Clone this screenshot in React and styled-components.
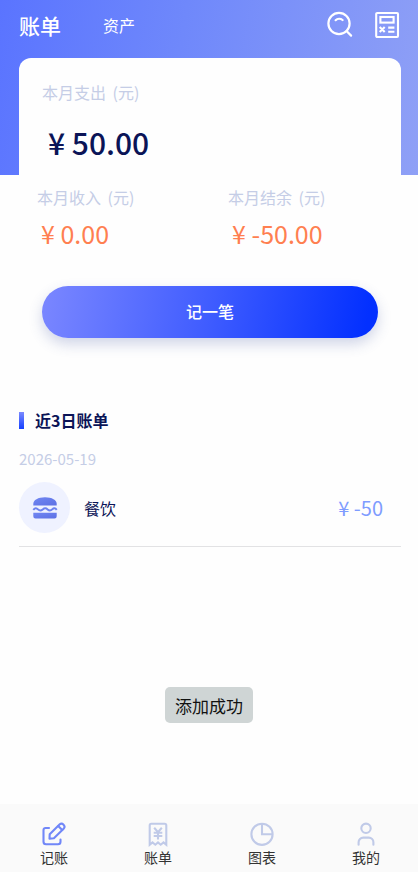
import React from "react";
import styled, { createGlobalStyle } from "styled-components";

const GlobalStyle = createGlobalStyle`
  * { box-sizing: border-box; }
  body {
    margin: 0;
    background: #fefefe;
    font-family: "Noto Sans CJK SC", sans-serif;
    color: #0b1457;
  }
  button { font-family: inherit; border: 0; padding: 0; background: none; cursor: pointer; }
  a { text-decoration: none; color: inherit; }
  h1, h2, p, ul { margin: 0; padding: 0; }
`;

const Page = styled.div`
  min-height: 100vh;
  display: flex;
  flex-direction: column;
  background: linear-gradient(100deg, #5a74ff 0%, #6f88fb 42%, #8fa0f6 100%) top / 100% 175px no-repeat;
`;

const TopBar = styled.header`
  display: flex;
  align-items: center;
  height: 58px;
  padding: 0 18px 8px 19px;
`;

const Tabs = styled.nav`
  display: flex;
  align-items: center;
  gap: 42px;
  flex: 1;
`;

const Tab = styled.a`
  color: #fff;
  font-size: ${(p) => (p.$active ? 21 : 16)}px;
  font-weight: ${(p) => (p.$active ? 500 : 400)};
  line-height: 32px;
`;

const Tools = styled.div`
  display: flex;
  gap: 21px;
`;

const IconButton = styled.button`
  display: flex;
  color: #fff;
`;

const Main = styled.main`
  flex: 1;
  padding: 0 17px 0 19px;
`;

const Summary = styled.section`
  background: #fefefe;
  border-radius: 12px 12px 0 0;
  padding: 22px 23px 0;
`;

const Label = styled.p`
  font-size: 16px;
  line-height: 24px;
  color: #c5cde6;
`;

const Unit = styled.span`
  margin-left: 3px;
`;

const Total = styled.p`
  padding-left: 6px;
  margin-top: 16px;
  font-size: 30px;
  font-weight: 500;
  line-height: 44px;
`;

const Figures = styled.div`
  display: grid;
  grid-template-columns: 1fr 1fr;
  margin: 21px -23px 0;
`;

const Figure = styled.div`
  padding-left: 18px;
`;

const Amount = styled.p`
  padding-left: 4px;
  margin-top: 6px;
  font-size: 25px;
  line-height: 36px;
  color: #ff7f50;
`;

const AddButton = styled.button`
  display: block;
  width: 100%;
  height: 52px;
  margin-top: 35px;
  padding-bottom: 2px;
  border-radius: 26px;
  background: linear-gradient(100deg, #7b87ff 0%, #3f5cff 50%, #0330ff 96%);
  box-shadow: 0 6px 14px rgba(60, 80, 160, 0.24);
  color: #fff;
  font-size: 16px;
  font-weight: 500;
`;

const Recent = styled.section`
  margin-top: 70px;
`;

const Heading = styled.h2`
  display: flex;
  align-items: center;
  gap: 11px;
  font-size: 16px;
  font-weight: 700;
  line-height: 24px;

  &::before {
    content: "";
    width: 5px;
    height: 17px;
    background: linear-gradient(#7b8aff, #1440ff);
  }
`;

const DateLine = styled.p`
  margin-top: 15px;
  font-size: 15px;
  line-height: 24px;
  color: #c5cde6;
`;

const Bills = styled.ul`
  list-style: none;
`;

const Bill = styled.li`
  display: flex;
  align-items: center;
  gap: 14px;
  margin-top: 11px;
  padding: 0 18px 13px 0;
  border-bottom: 1px solid #e2e2e4;
`;

const Badge = styled.span`
  display: grid;
  place-items: center;
  width: 51px;
  height: 51px;
  border-radius: 50%;
  background: #eff2ff;
`;

const BillName = styled.span`
  flex: 1;
  font-size: 16px;
  line-height: 24px;
`;

const BillAmount = styled.span`
  font-size: 20px;
  line-height: 28px;
  color: #7f9cff;
`;

const Toast = styled.div`
  position: fixed;
  left: 50%;
  bottom: 149px;
  transform: translateX(-50%);
  padding: 6px 10px 5px;
  border-radius: 5px;
  background: #cfd5d5;
  color: #111;
  font-size: 17px;
  line-height: 25px;
  white-space: nowrap;
`;

const BottomNav = styled.nav`
  display: grid;
  grid-template-columns: repeat(4, 1fr);
  height: 68px;
  padding-left: 2px;
  background: #fafafa;
`;

const NavItem = styled.a`
  display: flex;
  flex-direction: column;
  align-items: center;
  padding-top: 17px;
  font-size: 14px;
  line-height: 20px;
  color: #333;

  svg { color: ${(p) => (p.$active ? "#7187f8" : "#c0cae8")}; }
`;

const SearchIcon = () => (
  <svg width="26" height="28" viewBox="0 0 26 28" fill="none" stroke="currentColor" strokeWidth="2.2" strokeLinecap="round" aria-hidden="true">
    <circle cx="12" cy="12.5" r="10.6" />
    <path d="M8.6 9.200C10.500 7.300 13.500 7.300 15.600 9" />
    <path d="M19.5 20l4.600 4.600" />
  </svg>
);

const CalculatorIcon = () => (
  <svg width="26" height="28" viewBox="0 0 26 28" fill="none" stroke="currentColor" strokeWidth="2.1" aria-hidden="true">
    <rect x="2.2" y="2" width="21.8" height="24" rx="1" />
    <rect x="6.4" y="6" width="13.200" height="5.600" />
    <path d="M5.700 16l5 5M10.700 16l-5 5M14.200 16.600h6.200M14.200 20.800h6.200" />
  </svg>
);

const BurgerIcon = () => (
  <svg width="26" height="24" viewBox="0 0 26 24" aria-hidden="true">
    <defs>
      <linearGradient id="burger" x1="0" y1="0" x2="1" y2="1">
        <stop offset="0" stopColor="#7187f2" />
        <stop offset="1" stopColor="#5c70e4" />
      </linearGradient>
    </defs>
    <path fill="url(#burger)" d="M1.3 9.6V7.8C1.3 4 6 1.2 13 1.2S24.7 4 24.7 7.8v1.8z" />
    <path fill="none" stroke="#6d82ef" strokeWidth="2" d="M1.3 13.8c2-2.3 3.3-1.8 4.7-.4s2.8 1.6 4.7 0 3.2-1.6 4.9 0 3 1.6 4.6 0 3-1.6 4.5.4" />
    <path fill="url(#burger)" d="M1.3 16.8h23.4v3.5a2.2 2.2 0 0 1-2.2 2.2h-19a2.2 2.2 0 0 1-2.2-2.2z" />
  </svg>
);

const navIcon = {
  width: 26,
  height: 26,
  viewBox: "0 0 26 26",
  fill: "none",
  stroke: "currentColor",
  strokeWidth: 2.1,
  "aria-hidden": true,
};

const EditIcon = () => (
  <svg {...navIcon} strokeLinecap="round" strokeLinejoin="round">
    <path d="M8 7H4.500a2 2 0 0 0-2 2v11.800a2.500 2.500 0 0 0 2.500 2.500h12a2.500 2.500 0 0 0 2.500-2.500V18.500" />
    <path d="M8.700 13.300 18.500 3.600a2.900 2.900 0 0 1 4.100 4.100L12.900 17.200 8.500 17.600z" />
    <path d="M17.200 5l4 4" />
  </svg>
);

const ReceiptIcon = () => (
  <svg {...navIcon}>
    <path d="M4.700 23.700V4.400A1.600 1.600 0 0 1 6.300 2.800h13.400a1.600 1.600 0 0 1 1.600 1.600v19.300l-2.800-2.300-2.800 2.300-2.700-2.300-2.700 2.300-2.800-2.300z" />
    <path d="M9.200 6.800l3.800 4.400 3.800-4.400M8.700 11.800h8.600M8.700 15h8.600M13 11.200v7.300" />
  </svg>
);

const ChartIcon = () => (
  <svg {...navIcon}>
    <circle cx="13" cy="13.3" r="10.6" />
    <path d="M13 2.700v10.600h10.600" />
  </svg>
);

const PersonIcon = () => (
  <svg {...navIcon} strokeLinecap="round">
    <circle cx="13" cy="7.3" r="4.7" />
    <path d="M5.600 23.800v-2.600a4.600 4.600 0 0 1 4.600-4.600h5.600a4.600 4.600 0 0 1 4.600 4.600v2.600" />
  </svg>
);

const navItems = [
  { label: "记账", Icon: EditIcon, active: true },
  { label: "账单", Icon: ReceiptIcon },
  { label: "图表", Icon: ChartIcon },
  { label: "我的", Icon: PersonIcon },
];

const figures = [
  { label: "本月收入", value: "¥ 0.00" },
  { label: "本月结余", value: "¥ -50.00" },
];

export default function App() {
  return (
    <>
      <GlobalStyle />
      <Page>
        <TopBar>
          <Tabs>
            <Tab href="#bills" $active>账单</Tab>
            <Tab href="#assets">资产</Tab>
          </Tabs>
          <Tools>
            <IconButton type="button" aria-label="搜索"><SearchIcon /></IconButton>
            <IconButton type="button" aria-label="计算器"><CalculatorIcon /></IconButton>
          </Tools>
        </TopBar>
        <Main>
          <Summary>
            <Label>本月支出 <Unit>(元)</Unit></Label>
            <Total>¥ 50.00</Total>
            <Figures>
              {figures.map((f) => (
                <Figure key={f.label}>
                  <Label>{f.label} <Unit>(元)</Unit></Label>
                  <Amount>{f.value}</Amount>
                </Figure>
              ))}
            </Figures>
            <AddButton type="button">记一笔</AddButton>
          </Summary>
          <Recent>
            <Heading>近3日账单</Heading>
            <DateLine>2026-05-19</DateLine>
            <Bills>
              <Bill>
                <Badge><BurgerIcon /></Badge>
                <BillName>餐饮</BillName>
                <BillAmount>¥ -50</BillAmount>
              </Bill>
            </Bills>
          </Recent>
        </Main>
        <BottomNav>
          {navItems.map(({ label, Icon, active }) => (
            <NavItem key={label} href="#" $active={active}>
              <Icon />
              {label}
            </NavItem>
          ))}
        </BottomNav>
        <Toast role="status">添加成功</Toast>
      </Page>
    </>
  );
}
